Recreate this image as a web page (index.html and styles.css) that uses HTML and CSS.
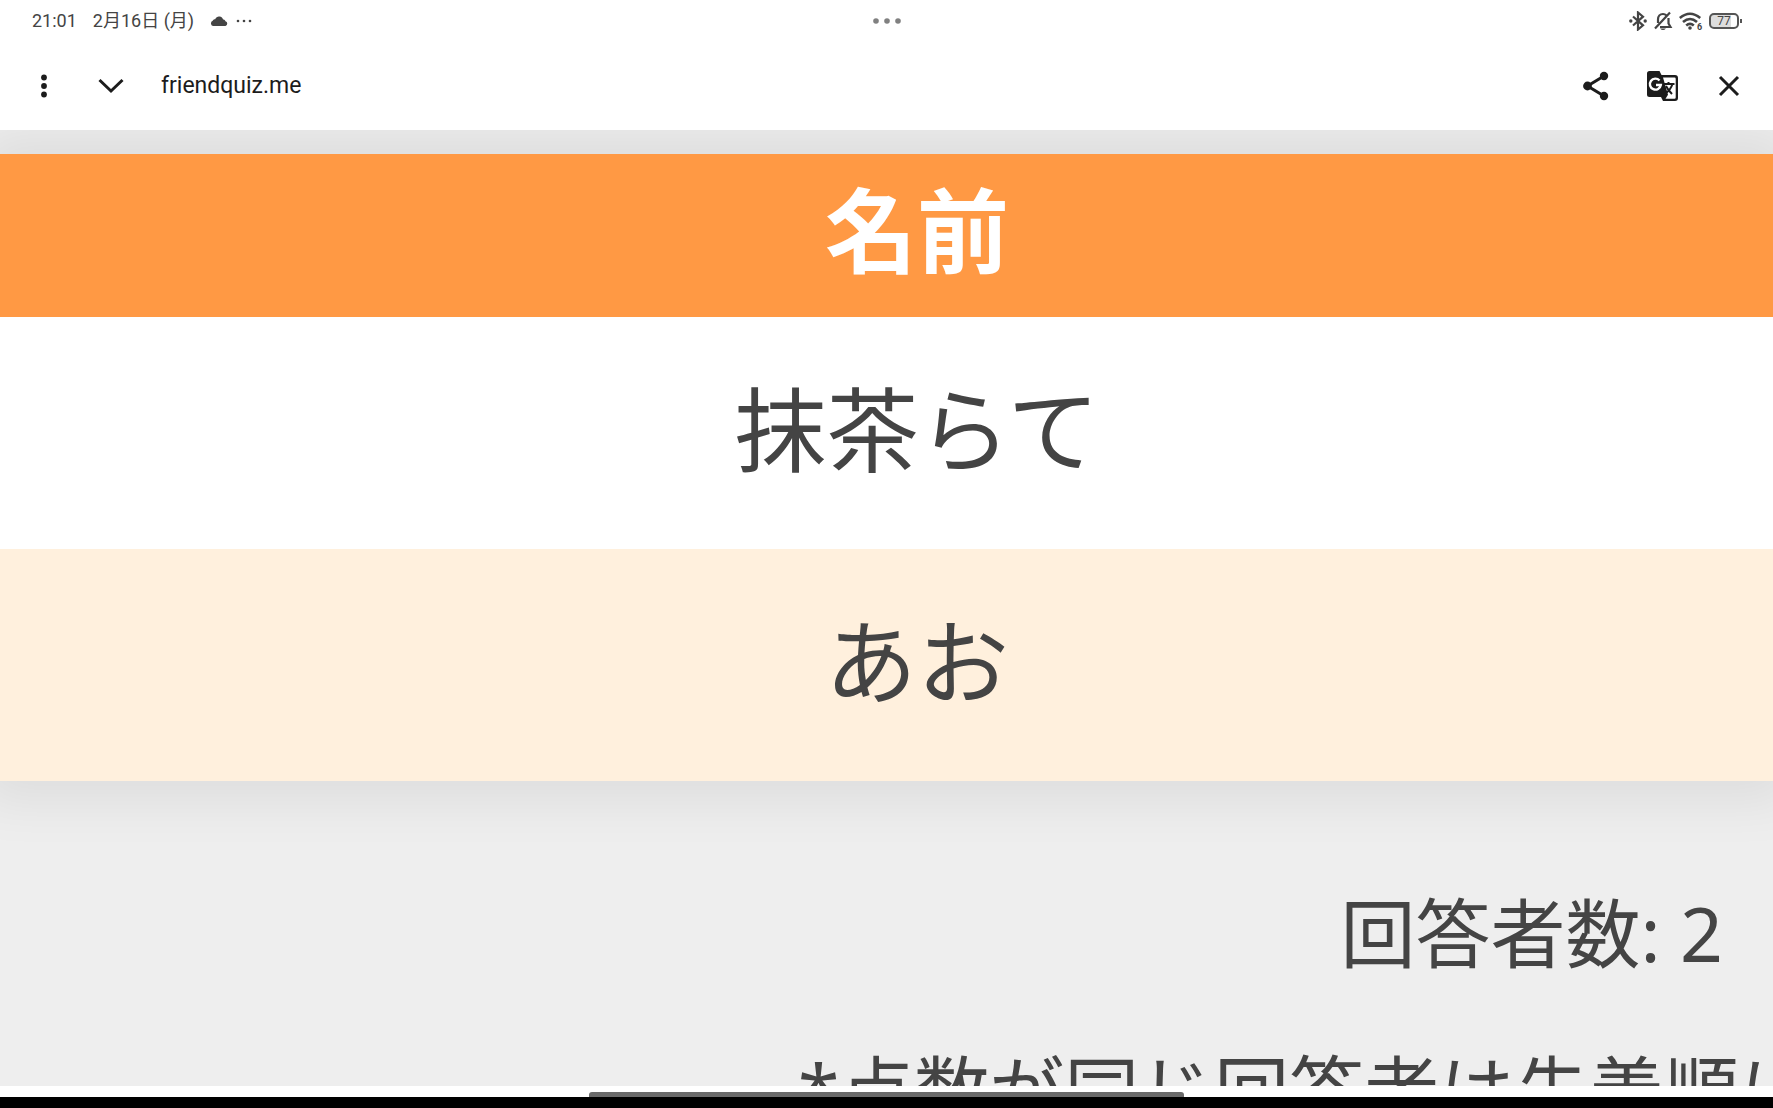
FILE: index.html
```html
<!DOCTYPE html>
<html lang="ja">
<head>
<meta charset="utf-8">
<meta name="viewport" content="width=device-width, initial-scale=1">
<title>friendquiz.me</title>
<link rel="stylesheet" href="styles.css">
</head>
<body>
<header class="status">
  <div class="status-left">
    <span>21:01</span>
    <span class="date">2月16日 (月)</span>
    <svg class="cloud" viewBox="0 0 18 10" width="18" height="10" aria-hidden="true"><path d="M3 10a2.800 2.800 0 0 1-.3-5.300C3.500 3.500 4.500 3.200 5.200 3.300 6 1 8 .2 9.500.5c2 .2 3.200 1.500 3.600 3.100 1.200 0 2 .7 2.300 1.600A2.500 2.500 0 0 1 15.500 10Z"/></svg>
    <svg viewBox="0 0 16 4" width="16" height="4" aria-hidden="true"><circle cx="2" cy="2" r="1.300"/><circle cx="8" cy="2" r="1.300"/><circle cx="14" cy="2" r="1.300"/></svg>
  </div>
  <svg class="window-dots" viewBox="0 0 30 6" width="30" height="6" aria-hidden="true"><circle cx="4" cy="3" r="2.800"/><circle cx="15" cy="3" r="2.800"/><circle cx="26" cy="3" r="2.800"/></svg>
  <div class="status-right">
    <svg viewBox="0 0 18 20" width="18" height="20" aria-hidden="true"><path class="line" d="m4 5.500 10 8.800-5 4.200v-17l5 4.200-10 8.800"/><circle cx="1.800" cy="10" r="1.700"/><circle cx="16.200" cy="10" r="1.700"/></svg>
    <svg viewBox="0 0 20 20" width="20" height="20" aria-hidden="true"><path class="line" d="M5 12V8.500C5 5 7 3 10 3c1.400 0 2.400.4 3.200 1.200M15.500 7v5.500l2 3.500H7M17 1.500 2 17.500"/><path d="M7 17.500h6q-3 3-6 0Z"/></svg>
    <svg viewBox="0 0 24 20" width="24" height="20" aria-hidden="true"><path class="wave" d="M.8 7q10.200-8.500 20.400 0M4 11q7-6 14 0M7.200 14.500q3.800-3.200 7.600 0"/><circle cx="11" cy="17" r="1.800"/><text class="wifi-number" x="18" y="19">6</text></svg>
    <span class="battery">77</span>
  </div>
</header>
<nav class="toolbar">
  <button type="button" aria-label="メニュー"><svg viewBox="0 0 30 30" width="30" height="30"><circle cx="15" cy="6.500" r="2.900"/><circle cx="15" cy="15" r="2.900"/><circle cx="15" cy="23.500" r="2.900"/></svg></button>
  <button type="button" aria-label="最小化"><svg viewBox="0 0 30 30" width="30" height="30"><path class="stroke" d="m4.500 9 11.500 11L27.500 9"/></svg></button>
  <span class="address">friendquiz.me</span>
  <button type="button" aria-label="共有"><svg viewBox="0 0 30 30" width="30" height="30"><path class="stroke" d="M22 5 5.500 15 22 25"/><circle cx="22" cy="5" r="4.200"/><circle cx="5.500" cy="15" r="4.400"/><circle cx="22" cy="25" r="4.200"/></svg></button>
  <button type="button" aria-label="翻訳"><svg viewBox="0 0 32 32" width="32" height="32"><path d="M2.500 1h10l2 4H28q3 0 3 3v20q0 3-3 3H16l-2-4H2.500Q0 27 0 24.500v-21Q0 1 2.500 1Z"/><path class="paper" d="M16 7.500H27.500q1.200 0 1.200 1.200v18.800q0 1.200-1.200 1.200H18.500l2.500-4Z"/><path class="glyph-line" d="M12.500 10.500a5.500 5.500 0 1 0 1.300 4.500H9"/><path class="letter-line" d="M16.500 14h11M21.500 12v2M25.500 14q-2 6-7 9.500M19 16q2 4 6 8"/></svg></button>
  <button type="button" aria-label="閉じる"><svg viewBox="0 0 30 30" width="30" height="30"><path class="stroke" d="m6 6 18 18M24 6 6 24"/></svg></button>
</nav>
<main class="page">
  <table class="ranking">
    <thead><tr><th scope="col">名前</th></tr></thead>
    <tbody>
      <tr><td>抹茶らて</td></tr>
      <tr><td>あお</td></tr>
    </tbody>
  </table>
  <p class="count">回答者数: 2</p>
  <p class="note">*点数が同じ回答者は先着順に</p>
</main>
<footer class="gesture-bar"><div class="handle"></div></footer>
</body>
</html>
```

FILE: styles.css
```css
* { box-sizing: border-box; }

body {
  display: flex;
  flex-direction: column;
  height: 100vh;
  margin: 0;
  overflow: hidden;
  background: #fff;
  color: #444;
  font-family: "Noto Sans CJK JP", sans-serif;
}

svg { display: block; fill: currentColor; }

.status {
  display: grid;
  grid-template-columns: 1fr auto 1fr;
  align-items: center;
  flex: none;
  height: 42px;
  padding: 0 32px;
  font: 400 18px/24px Roboto, "Noto Sans CJK JP", sans-serif;
}

.status-left, .status-right { display: flex; align-items: center; }
.status-left { gap: 8px; }
.date { margin: 0 8px; }
.window-dots { color: #808080; }
.status-right { justify-content: flex-end; gap: 6px; padding-right: 2px; }
.line { fill: none; stroke: currentColor; stroke-width: 2.2; }
.wave { fill: none; stroke: currentColor; stroke-width: 2.6; }
.wifi-number { font: 700 9px Roboto, sans-serif; }

.battery {
  position: relative;
  width: 30px;
  height: 16px;
  border: 2px solid #555;
  border-radius: 5px;
  background: linear-gradient(90deg, #ddd 77%, #fff 77%);
  font-size: 12px;
  line-height: 12px;
  text-align: center;
}

.battery::after {
  content: "";
  position: absolute;
  top: 4px;
  right: -5px;
  width: 2px;
  height: 4px;
  background: #555;
}

.toolbar {
  display: flex;
  align-items: center;
  flex: none;
  gap: 36px;
  height: 88px;
  padding: 0 29px;
  color: #1c1c1c;
}

.toolbar button {
  display: flex;
  align-items: center;
  justify-content: center;
  width: 30px;
  height: 32px;
  padding: 0;
  border: 0;
  background: none;
  color: inherit;
}

.toolbar svg { flex: none; }
.address { flex: 1; font: 400 23px/32px Roboto, sans-serif; }
.stroke { fill: none; stroke: currentColor; stroke-width: 3; }
.paper { fill: #fff; }
.glyph-line { fill: none; stroke: #fff; stroke-width: 2.4; }
.letter-line { fill: none; stroke: currentColor; stroke-width: 2; }

.page {
  flex: 1;
  min-height: 0;
  overflow: hidden;
  padding-top: 24px;
  background: #eee;
}

.ranking {
  width: 100%;
  border-collapse: collapse;
  background: #fff;
  box-shadow: 0 0 50px 20px rgba(0, 0, 0, 0.07);
  font-size: 92px;
  line-height: 132px;
}

.ranking th, .ranking td { padding: 42px 0 58px 61px; text-align: center; }
.ranking th { padding-top: 6px; padding-bottom: 25px; background: #ff9944; color: #fff; font-weight: 700; }
.ranking tbody tr:nth-child(even) { background: #fff0dd; }

.count, .note {
  margin: 0;
  font-family: "Noto Sans", "Noto Sans CJK JP", sans-serif;
  font-size: 75px;
  line-height: 108px;
  white-space: nowrap;
}

.count { padding: 98px 50px 49px 0; text-align: right; }
.note { padding-left: 798px; }

.gesture-bar {
  display: flex;
  flex: none;
  align-items: flex-end;
  justify-content: center;
  height: 22px;
  border-bottom: 11px solid #000;
}

.handle {
  width: 34%;
  max-width: 595px;
  height: 5px;
  border-radius: 3px 3px 0 0;
  background: #6a6a6a;
}
```
